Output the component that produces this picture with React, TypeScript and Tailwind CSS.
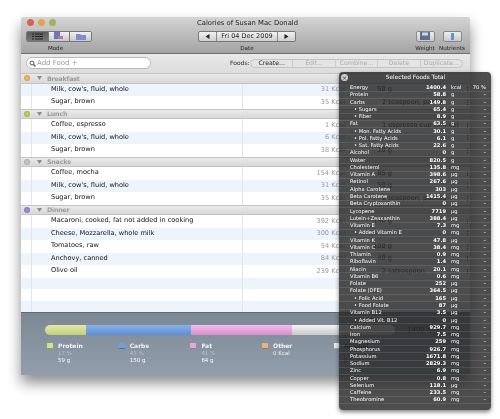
import React from "react";

type Food = { n: string; k: string; w: string };
const groups: { name: string; dot: string; foods: Food[] }[] = [
  { name: "Breakfast", dot: "bg-[#eeb45c]", foods: [
    { n: "Milk, cow's, fluid, whole", k: "31 Kcal", w: "50 g" },
    { n: "Sugar, brown", k: "35 Kcal", w: "2 teaspoon, packed" } ] },
  { name: "Lunch", dot: "bg-[#a9d64e]", foods: [
    { n: "Coffee, espresso", k: "1 Kcal", w: "1 espresso cup (3 fl oz)" },
    { n: "Milk, cow's, fluid, whole", k: "6 Kcal", w: "" },
    { n: "Sugar, brown", k: "38 Kcal", w: "10 g" } ] },
  { name: "Snacks", dot: "bg-[#c4c4c4]", foods: [
    { n: "Coffee, mocha", k: "154 Kcal", w: "85 g" },
    { n: "Milk, cow's, fluid, whole", k: "31 Kcal", w: "50 g" },
    { n: "Sugar, brown", k: "35 Kcal", w: "2 teaspoon, packed" } ] },
  { name: "Dinner", dot: "bg-[#a184e0]", foods: [
    { n: "Macaroni, cooked, fat not added in cooking", k: "392 Kcal", w: "150 g" },
    { n: "Cheese, Mozzarella, whole milk", k: "300 Kcal", w: "" },
    { n: "Tomatoes, raw", k: "54 Kcal", w: "100 g" },
    { n: "Anchovy, canned", k: "84 Kcal", w: "40 g" },
    { n: "Olive oil", k: "239 Kcal", w: "2 tablespoon" } ] },
];

const nutrients: [string, string, string, boolean?][] = [
  ["Energy", "1400.4", "kcal"], ["Protein", "58.8", "g"], ["Carbs", "149.8", "g"],
  ["Sugars", "65.4", "g", true], ["Fiber", "8.9", "g", true], ["Fat", "63.5", "g"],
  ["Mon. Fatty Acids", "30.1", "g", true], ["Pol. Fatty Acids", "6.1", "g", true], ["Sat. Fatty Acids", "22.6", "g", true],
  ["Alcohol", "0", "g"], ["Water", "820.5", "g"], ["Cholesterol", "135.8", "mg"], ["Vitamin A", "398.6", "µg"],
  ["Retinol", "267.6", "µg"], ["Alpha Carotene", "303", "µg"], ["Beta Carotene", "1415.4", "µg"],
  ["Beta Cryptoxanthin", "0", "µg"], ["Lycopene", "7719", "µg"], ["Lutein+Zeaxanthin", "388.4", "µg"],
  ["Vitamin E", "7.3", "mg"], ["Added Vitamin E", "0", "mg", true], ["Vitamin K", "47.8", "µg"], ["Vitamin C", "38.4", "mg"],
  ["Thiamin", "0.9", "mg"], ["Riboflavin", "1.4", "mg"], ["Niacin", "20.1", "mg"], ["Vitamin B6", "0.6", "mg"],
  ["Folate", "252", "µg"], ["Folate (DFE)", "364.5", "µg"], ["Folic Acid", "165", "µg", true], ["Food Folate", "87", "µg", true],
  ["Vitamin B12", "3.5", "µg"], ["Added Vit. B12", "0", "µg", true], ["Calcium", "929.7", "mg"], ["Iron", "7.5", "mg"],
  ["Magnesium", "259", "mg"], ["Phosphorus", "926.7", "mg"], ["Potassium", "1671.8", "mg"], ["Sodium", "2829.3", "mg"],
  ["Zinc", "6.9", "mg"], ["Copper", "0.8", "mg"], ["Selenium", "118.1", "µg"], ["Caffeine", "233.5", "mg"], ["Theobromine", "60.9", "mg"],
];

const legend = [
  { n: "Protein", c: "bg-[#d5e08e]", a: "17 %", b: "59 g" },
  { n: "Carbs", c: "bg-[#6f9fe0]", a: "43 %", b: "150 g" },
  { n: "Fat", c: "bg-[#e8a6e0]", a: "41 %", b: "64 g" },
  { n: "Other", c: "bg-[#e8b084]", a: "0 Kcal", b: "" },
];

function Dot({ c }: { c: string }) {
  return <span className={`block w-[6px] h-[6px] rounded-full ${c} border border-black/10`} />;
}

function Tri({ dir }: { dir: "l" | "r" }) {
  return (
    <svg width="5" height="5" viewBox="0 0 5 5">
      <path d={dir === "l" ? "M0.5 2.5 L4.5 0 V5 Z" : "M4.5 2.5 L0.5 0 V5 Z"} fill="#222" />
    </svg>
  );
}

function Group({ name, dot }: { name: string; dot: string }) {
  return (
    <div className="h-[10.5px] flex items-center border-y border-[#c4c4c4] bg-gradient-to-b from-[#e9e9e9] to-[#d8d8d8]">
      <span className="w-[11px] flex justify-center"><Dot c={dot} /></span>
      <span className="w-[15px] pl-[5px] flex"><svg width="5" height="4" viewBox="0 0 5 4"><path d="M0 0 H5 L2.5 4 Z" fill="#8a8a8a" /></svg></span>
      <span className="text-[6.3px] font-semibold text-[#9a9a9a] tracking-[-0.2px]">{name}</span>
    </div>
  );
}

function Row({ f, alt }: { f: Food; alt: boolean }) {
  const grams = f.w.endsWith(" g");
  return (
    <div className={`h-[12.5px] flex items-center ${alt ? "bg-[#edf4fb]" : "bg-white"} text-[6.6px] leading-none whitespace-nowrap`}>
      <span className="w-[11px] h-full border-r border-[#dfe5ea]" />
      <span className="w-[211px] h-full border-r border-[#dfe5ea] pl-[19px] pb-[1px] flex items-center text-[#111]">{f.n}</span>
      <span className="w-[102px] text-right text-[#999]">{f.k}</span>
      <span className={`w-[47px] shrink-0 text-[#222] ${grams ? "text-right" : "pl-[37px]"}`}>{f.w}</span>
      {f.n && <span className="ml-[75px] w-[1px] h-[5px] shrink-0 border-l border-dotted border-[#333]" />}
    </div>
  );
}

function ToolIcon({ sel, kind }: { sel?: boolean; kind: number }) {
  return (
    <span className={`flex-1 h-full flex items-center justify-center border-r border-[#777] last:border-r-0 ${sel ? "bg-gradient-to-b from-[#5c5c5c] to-[#777]" : "bg-gradient-to-b from-[#f2f2f2] to-[#c8c8c8]"}`}>
      {kind === 0 && (
        <svg width="11" height="7" viewBox="0 0 11 7"><path d="M0 1h2M3 1h8M0 3.500h2M3 3.500h8M0 6h2M3 6h8" stroke="#222" strokeWidth="1" /></svg>
      )}
      {kind === 1 && (
        <svg width="10" height="8" viewBox="0 0 10 8"><rect x="0" y="0" width="6" height="7" fill="#6e78b0" /><rect x="4" y="4" width="5" height="3" fill="#b07ab0" /></svg>
      )}
      {kind === 2 && (
        <svg width="10" height="7" viewBox="0 0 10 7"><path d="M0 1h4l1 1h5v5H0z" fill="#7f8cd0" /></svg>
      )}
    </span>
  );
}

function SegBtn({ t, dark }: { t: string; dark?: boolean }) {
  return (
    <span className={`flex-1 h-full flex items-center justify-center border-r border-[#cdcdcd] last:border-r-0 text-[6.2px] leading-none ${dark ? "text-[#222]" : "text-[#aaa]"}`}>{t}</span>
  );
}

export default function App() {
  return (
    <div className="relative w-[500px] h-[419px] bg-white overflow-hidden blur-[0.35px] font-['DejaVu_Sans',sans-serif]">
      <div className="absolute left-[21px] top-[17px] w-[449px] h-[358px] flex flex-col shadow-[0_8px_14px_rgba(0,0,0,0.45)] overflow-hidden rounded-t-[2px]">
        {/* title + toolbar */}
        <div className="h-[37px] shrink-0 bg-gradient-to-b from-[#d4d4d4] to-[#a4a4a4] border-b border-[#6e6e6e] px-[5px] flex flex-col">
          <div className="h-[13px] flex items-center relative">
            <span className="w-[7px] h-[7px] rounded-full bg-[#d9634e] ml-[1px] -mt-[1px]" />
            <span className="w-[7px] h-[7px] rounded-full bg-[#e8a050] ml-[4px] -mt-[1px]" />
            <span className="w-[7px] h-[7px] rounded-full bg-[#9ab85a] ml-[4px] -mt-[1px]" />
            <span className="absolute left-[171px] top-[1px] text-[6.8px] leading-[10px] text-[#222] whitespace-nowrap">Calories of Susan Mac Donald</span>
          </div>
          <div className="flex items-start h-[23px] mt-[1px]">
            <div className="w-[66px] flex flex-col items-center">
              <div className="w-[66px] h-[11px] flex border border-[#777] rounded-[2px] overflow-hidden">
                <ToolIcon sel kind={0} /><ToolIcon kind={1} /><ToolIcon kind={2} />
              </div>
              <span className="mt-[2px] text-[5.6px] leading-[8px] text-[#222] mr-[7px]">Mode</span>
            </div>
            <div className="w-[98px] ml-[106px] flex flex-col items-center">
              <div className="w-[98px] h-[11px] flex items-center border border-[#777] rounded-[2px] overflow-hidden bg-gradient-to-b from-[#f2f2f2] to-[#cfcfcf]">
                <span className="w-[18px] h-full flex items-center justify-center border-r border-[#888]"><Tri dir="l" /></span>
                <span className="flex-1 text-center text-[6.5px] leading-none text-[#222]">Fri 04 Dec 2009</span>
                <span className="w-[18px] h-full flex items-center justify-center border-l border-[#888]"><Tri dir="r" /></span>
              </div>
              <span className="mt-[2px] text-[5.6px] leading-[8px] text-[#222]">Date</span>
            </div>
            <div className="ml-[119px] w-[20px] flex flex-col items-center">
              <div className="w-[19px] h-[11px] flex items-center justify-center border border-[#888] rounded-[2px] bg-gradient-to-b from-[#efefef] to-[#c8c8c8]">
                <svg width="10" height="8" viewBox="0 0 10 8"><rect width="10" height="8" fill="#5d6f90" /><rect x="2" y="0.500" width="6" height="3" fill="#cfd6e2" /></svg>
              </div>
              <span className="mt-[2px] text-[5.6px] leading-[8px] text-[#222]">Weight</span>
            </div>
            <div className="ml-[4px] w-[26px] flex flex-col items-center">
              <div className="w-[19px] h-[11px] flex items-center justify-center border border-[#888] rounded-[2px] bg-gradient-to-b from-[#efefef] to-[#c8c8c8]">
                <svg width="3" height="7" viewBox="0 0 3 7"><rect width="3" height="7" fill="#5f94d6" /></svg>
              </div>
              <span className="mt-[2px] text-[5.6px] leading-[8px] text-[#222]">Nutrients</span>
            </div>
          </div>
        </div>
        {/* search bar */}
        <div className="h-[19px] shrink-0 bg-gradient-to-b from-[#e9e9e9] to-[#dcdcdc] flex items-center pl-[5px] pb-[1px]">
          <div className="w-[125px] h-[12px] rounded-full bg-white border border-[#bbb] flex items-center pl-[2px] gap-[1px]">
            <svg width="7" height="7" viewBox="0 0 7 7"><circle cx="3" cy="3" r="2" fill="none" stroke="#555" strokeWidth="1" /><path d="M4.500 4.500 L6.500 6.500" stroke="#555" strokeWidth="1.200" /></svg>
            <span className="text-[7px] leading-none text-[#999]">Add Food +</span>
          </div>
          <span className="ml-[79px] w-[20px] text-[6px] leading-none text-[#222]">Foods:</span>
          <div className="ml-[0px] w-[213px] h-[9px] flex rounded-full border border-[#c4c4c4] bg-[#e4e4e4]">
            <SegBtn t="Create..." dark /><SegBtn t="Edit..." /><SegBtn t="Combine..." /><SegBtn t="Delete" /><SegBtn t="Duplicate..." />
          </div>
        </div>
        {/* table */}
        <div className="flex-1 bg-white flex flex-col overflow-hidden">
          {groups.map((g) => (
            <div key={g.name}>
              <Group name={g.name} dot={g.dot} />
              {g.foods.map((f, i) => (
                <Row key={i} f={f} alt={g.name === "Breakfast" ? i === 0 : i % 2 === 1} />
              ))}
            </div>
          ))}
          <Row f={{ n: "", k: "", w: "" }} alt />
          <Row f={{ n: "", k: "", w: "" }} alt={false} />
          <Row f={{ n: "", k: "", w: "" }} alt />
        </div>
        {/* footer */}
        <div className="relative h-[63px] shrink-0 bg-gradient-to-b from-[#7c8894] to-[#929eab] border-t border-[#5e6872] pl-[24px] pt-[12px]">
          <div className="w-[350px] h-[10px] flex rounded-full overflow-hidden">
            <span className="w-[41px] bg-gradient-to-b from-[#e2e9a6] to-[#c3cf7c]" />
            <span className="w-[105px] bg-gradient-to-b from-[#86b2ec] to-[#5f8fd2]" />
            <span className="w-[101px] bg-gradient-to-b from-[#f3bcec] to-[#d690cd]" />
            <span className="flex-1 bg-gradient-to-b from-[#f4f4f4] to-[#c9c9c9]" />
          </div>
          <div className="flex mt-[7px] pl-[2px]">
            {legend.map((l) => (
              <div key={l.n} className="w-[71.7px] flex">
                <span className={`w-[6px] h-[6px] mt-[1px] ${l.c} border-b border-black/30`} />
                <div className="ml-[5px] flex flex-col text-[5.5px] leading-[7.5px] text-white">
                  <span className="text-[6px] font-bold text-[#f2f4f6]">{l.n}</span>
                  <span className={l.b ? "text-[#b8c0c8]" : "text-[#eef0f2]"}>{l.a}</span>
                  <span>{l.b}</span>
                </div>
              </div>
            ))}
            <div className="w-[71px] flex">
              <span className="w-[6px] h-[6px] mt-[1px] bg-[#e8e8e8] border-b border-black/30" />
              <div className="ml-[4px] flex flex-col text-[5.5px] leading-[7.5px] text-[#222]">
                <span className="text-[6px] font-bold">Alcohol</span>
                <span className="h-[7.5px]" />
                <span>0 Kcal</span>
              </div>
            </div>
          </div>
          <span className="absolute left-[386px] top-[13px] text-[7px] leading-[8px] text-[#222] whitespace-nowrap">1400 Kcal</span>
        </div>
      </div>

      {/* HUD panel */}
      <div className="absolute left-[339px] top-[72px] w-[152px] h-[338px] rounded-[4px] bg-[#262626]/[0.82] shadow-[0_2px_4px_rgba(0,0,0,0.5)] flex flex-col">
        <div className="h-[12.5px] shrink-0 flex items-center justify-center relative">
          <span className="absolute left-[2px] top-[2px] w-[7px] h-[7px] rounded-full bg-[#cfcfcf] flex items-center justify-center text-[6px] leading-none text-[#333]">×</span>
          <span className="text-[5.8px] leading-none text-white ml-[1px]">Selected Foods Total</span>
        </div>
        <div>
          {nutrients.map(([n, v, u, sub], i) => (
            <div key={i} className="h-[7.28px] flex items-center text-[5.2px] leading-none text-white border-b border-white/10 whitespace-nowrap">
              <span className={`w-[87px] ${sub ? "pl-[15px]" : "pl-[11px]"}`}>{sub ? "• " : ""}{n}</span>
              <span className="w-[20px] text-right font-bold">{v}</span>
              <span className="w-[22px] pl-[5px]">{u}</span>
              <span className="w-[18px] text-right">{i === 0 ? "70 %" : "–"}</span>
            </div>
          ))}
        </div>
      </div>
    </div>
  );
}
